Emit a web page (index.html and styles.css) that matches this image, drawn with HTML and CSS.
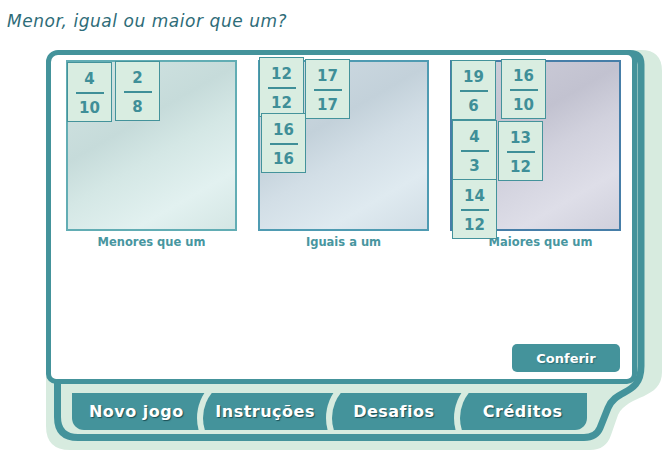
FILE: index.html
```html
<!DOCTYPE html>
<html lang="pt">
<head>
<meta charset="utf-8">
<title>Menor, igual ou maior que um?</title>
<link rel="stylesheet" href="styles.css">
</head>
<body>
<div class="app">
  <svg class="frame-art" viewBox="0 0 664 456" width="664" height="456" aria-hidden="true">
    <path class="frame-fill" d="M 560 50 L 641 50 Q 662 50 662 71 L 662 372 C 662 400 628 394 618 415 L 611 435 Q 606 450 590 450 L 70 450 Q 46 450 46 426 L 46 60 Z"/>
    <path class="frame-line" d="M 600 53.5 L 630 53.5 Q 641 53.5 641 64.5 L 641 366 C 641 396 616 388 608 408 L 600 428 Q 596 437.5 584 437.5 L 78 437.5 Q 57.5 437.5 57.5 417 L 57.5 370"/>
  </svg>

  <h1 class="title">Menor, igual ou maior que um?</h1>

  <div class="panel">
    <div class="bins">
      <div class="bin">
        <div class="tray tray-less">
          <div class="card" style="left:-1px;top:0px"><span class="num">4</span><span class="bar"></span><span class="den">10</span></div>
          <div class="card" style="left:47px;top:-1px"><span class="num">2</span><span class="bar"></span><span class="den">8</span></div>
        </div>
        <div class="bin-label">Menores que um</div>
      </div>
      <div class="bin">
        <div class="tray tray-equal">
          <div class="card" style="left:-1px;top:-5px"><span class="num">12</span><span class="bar"></span><span class="den">12</span></div>
          <div class="card" style="left:45px;top:-3px"><span class="num">17</span><span class="bar"></span><span class="den">17</span></div>
          <div class="card" style="left:1px;top:51px"><span class="num">16</span><span class="bar"></span><span class="den">16</span></div>
        </div>
        <div class="bin-label">Iguais a um</div>
      </div>
      <div class="bin">
        <div class="tray tray-more">
          <div class="card" style="left:-1px;top:-2px"><span class="num">19</span><span class="bar"></span><span class="den">6</span></div>
          <div class="card" style="left:49px;top:-3px"><span class="num">16</span><span class="bar"></span><span class="den">10</span></div>
          <div class="card" style="left:0px;top:58px"><span class="num">4</span><span class="bar"></span><span class="den">3</span></div>
          <div class="card" style="left:46px;top:59px"><span class="num">13</span><span class="bar"></span><span class="den">12</span></div>
          <div class="card" style="left:0px;top:117px"><span class="num">14</span><span class="bar"></span><span class="den">12</span></div>
        </div>
        <div class="bin-label bin-label-more">Maiores que um</div>
      </div>
    </div>
    <button class="check" type="button">Conferir</button>
  </div>

  <nav class="tabs">
    <span class="tab">Novo jogo</span>
    <span class="tab">Instruções</span>
    <span class="tab">Desafios</span>
    <span class="tab">Créditos</span>
  </nav>
</div>
</body>
</html>
```

FILE: styles.css
```css
* { box-sizing: border-box; }
html, body { margin: 0; padding: 0; background: #fff; }
body { font-family: "DejaVu Sans", Verdana, sans-serif; }

.app {
  position: relative;
  width: 664px;
  height: 456px;
  overflow: hidden;
}

.frame-art { position: absolute; left: 0; top: 0; z-index: 0; }
.frame-fill { fill: #d7ebdf; }
.frame-line { fill: none; stroke: #44939b; stroke-width: 7; }

.title {
  margin: 0;
  padding: 10px 0 0 7px;
  height: 32px;
  font-family: "DejaVu Sans", Verdana, sans-serif;
  font-style: italic;
  font-weight: normal;
  font-size: 17px;
  letter-spacing: 0.55px;
  line-height: 22px;
  color: #2e6c78;
}

.panel {
  position: relative;
  z-index: 1;
  margin: 18px 0 0 46px;
  width: 591px;
  height: 334px;
  background: #fff;
  border: 5px solid #44939b;
  border-radius: 12px 10px 10px 10px;
  display: flex;
  flex-direction: column;
  padding: 5px 0 0 15px;
}

.bins { display: flex; gap: 21px; }
.bin { width: 171px; display: flex; flex-direction: column; align-items: center; }

.tray {
  position: relative;
  width: 171px;
  height: 171px;
  border: 2px solid;
}
.tray-less {
  border-color: #62adb4;
  background: linear-gradient(150deg, #d3e5e3 0%, #c6dbda 38%, #d4e7e5 55%, #e2f1f0 78%, #d4e6e4 100%);
}
.tray-equal {
  border-color: #4f9bb2;
  background: linear-gradient(150deg, #d0dce3 0%, #c3d1da 38%, #d2dee6 55%, #dfeaf0 78%, #d1dde5 100%);
}
.tray-more {
  border-color: #467ea8;
  background: linear-gradient(150deg, #cfcfdb 0%, #c2c2d0 38%, #d1d1dd 55%, #dedee8 78%, #d0d0dc 100%);
}

.card {
  position: absolute;
  width: 45px;
  height: 60px;
  background: #d9ede1;
  border: 1px solid #44939b;
  display: flex;
  flex-direction: column;
  align-items: center;
  padding-top: 7px;
  color: #3f8f98;
  font-weight: bold;
  font-size: 15px;
  line-height: 18px;
}
.bar {
  display: block;
  width: 28px;
  height: 2px;
  margin: 4px 0 5px;
  background: #3f8f98;
}

.bin-label {
  margin-top: 4px;
  font-weight: bold;
  font-size: 11.5px;
  line-height: 14px;
  color: #4896a0;
}
.bin-label-more { margin-left: 10px; }

.check {
  align-self: flex-end;
  margin: auto 12px 7px 0;
  width: 108px;
  height: 28px;
  border: 0;
  border-radius: 5px;
  background: #44939b;
  color: #fff;
  font-family: "DejaVu Sans", Verdana, sans-serif;
  font-weight: bold;
  font-size: 13px;
  text-shadow: 1px 1px 1px rgba(0, 40, 45, 0.35);
  padding: 0;
}

.tabs {
  position: relative;
  z-index: 1;
  display: flex;
  margin: 9px 0 0 72px;
  width: 515px;
  height: 37px;
  border-radius: 0 0 12px 12px;
  overflow: hidden;
  background: #44939b;
}
.tab {
  position: relative;
  flex: 1;
  display: flex;
  align-items: center;
  justify-content: center;
  color: #fff;
  font-weight: bold;
  font-size: 16px;
  letter-spacing: 0.5px;
  text-shadow: 1px 1px 1px rgba(10, 50, 55, 0.7);
}
.tab + .tab::before {
  content: "";
  position: absolute;
  left: -4px;
  top: -21.5px;
  width: 80px;
  height: 80px;
  border-radius: 50%;
  border: 6px solid transparent;
  border-left-color: #d7ebdf;
}
```
